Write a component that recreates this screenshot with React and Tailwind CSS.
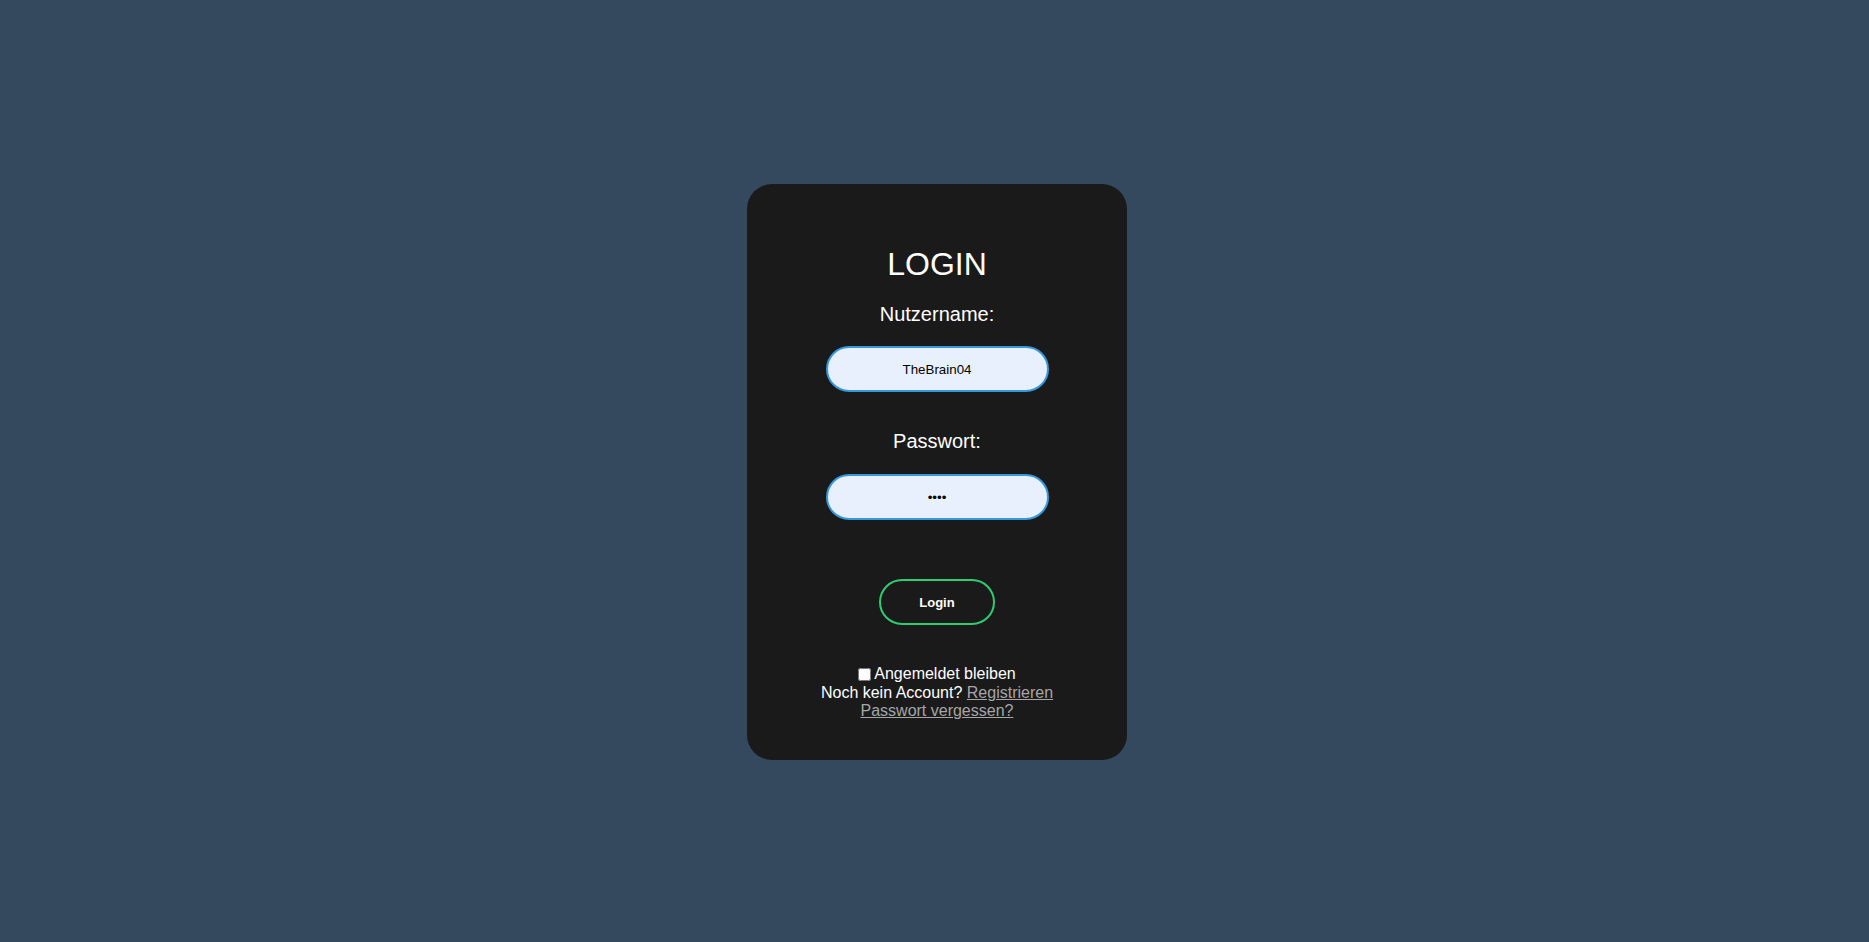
export default function App() {
  return (
    <div
      className="min-h-screen flex items-center justify-center bg-[#34495e] pl-[5px] pt-[2px] text-white"
      style={{ fontFamily: '"Liberation Sans", Arial, sans-serif' }}
    >
      <div className="w-[380px] rounded-[25px] bg-[#1a1a1a] pt-[40px] pb-[39px] flex flex-col items-center text-center">
        <h1 className="mt-[22px] text-[32px] leading-[37px]">LOGIN</h1>

        <label className="mt-[20px] text-[20px] leading-[23px]">Nutzername:</label>
        <input
          type="text"
          readOnly
          value="TheBrain04"
          className="mt-[20px] w-[223px] h-[46px] rounded-full border-2 border-[#3498db] bg-[#e8f0fe] text-center text-[13.33px] text-black outline-none"
        />

        <label className="mt-[38px] text-[20px] leading-[23px]">Passwort:</label>
        <input
          type="password"
          readOnly
          value="1234"
          className="mt-[21px] w-[223px] h-[46px] rounded-full border-2 border-[#3498db] bg-[#e8f0fe] text-center text-[13.33px] text-black outline-none"
        />

        <button className="mt-[59px] w-[116px] h-[46px] rounded-full border-2 border-[#2ecc71] bg-transparent text-[13px] font-bold text-white">
          Login
        </button>

        <div className="mt-[40px] text-[16px] leading-[18.4px]">
          <label className="flex items-center justify-center">
            <input type="checkbox" className="w-[13px] h-[13px] mr-[3px]" />
            Angemeldet bleiben
          </label>
          <div>
            Noch kein Account?{" "}
            <a href="#" className="text-[#a6a6a6] underline">
              Registrieren
            </a>
          </div>
          <div>
            <a href="#" className="text-[#a6a6a6] underline">
              Passwort vergessen?
            </a>
          </div>
        </div>
      </div>
    </div>
  );
}
